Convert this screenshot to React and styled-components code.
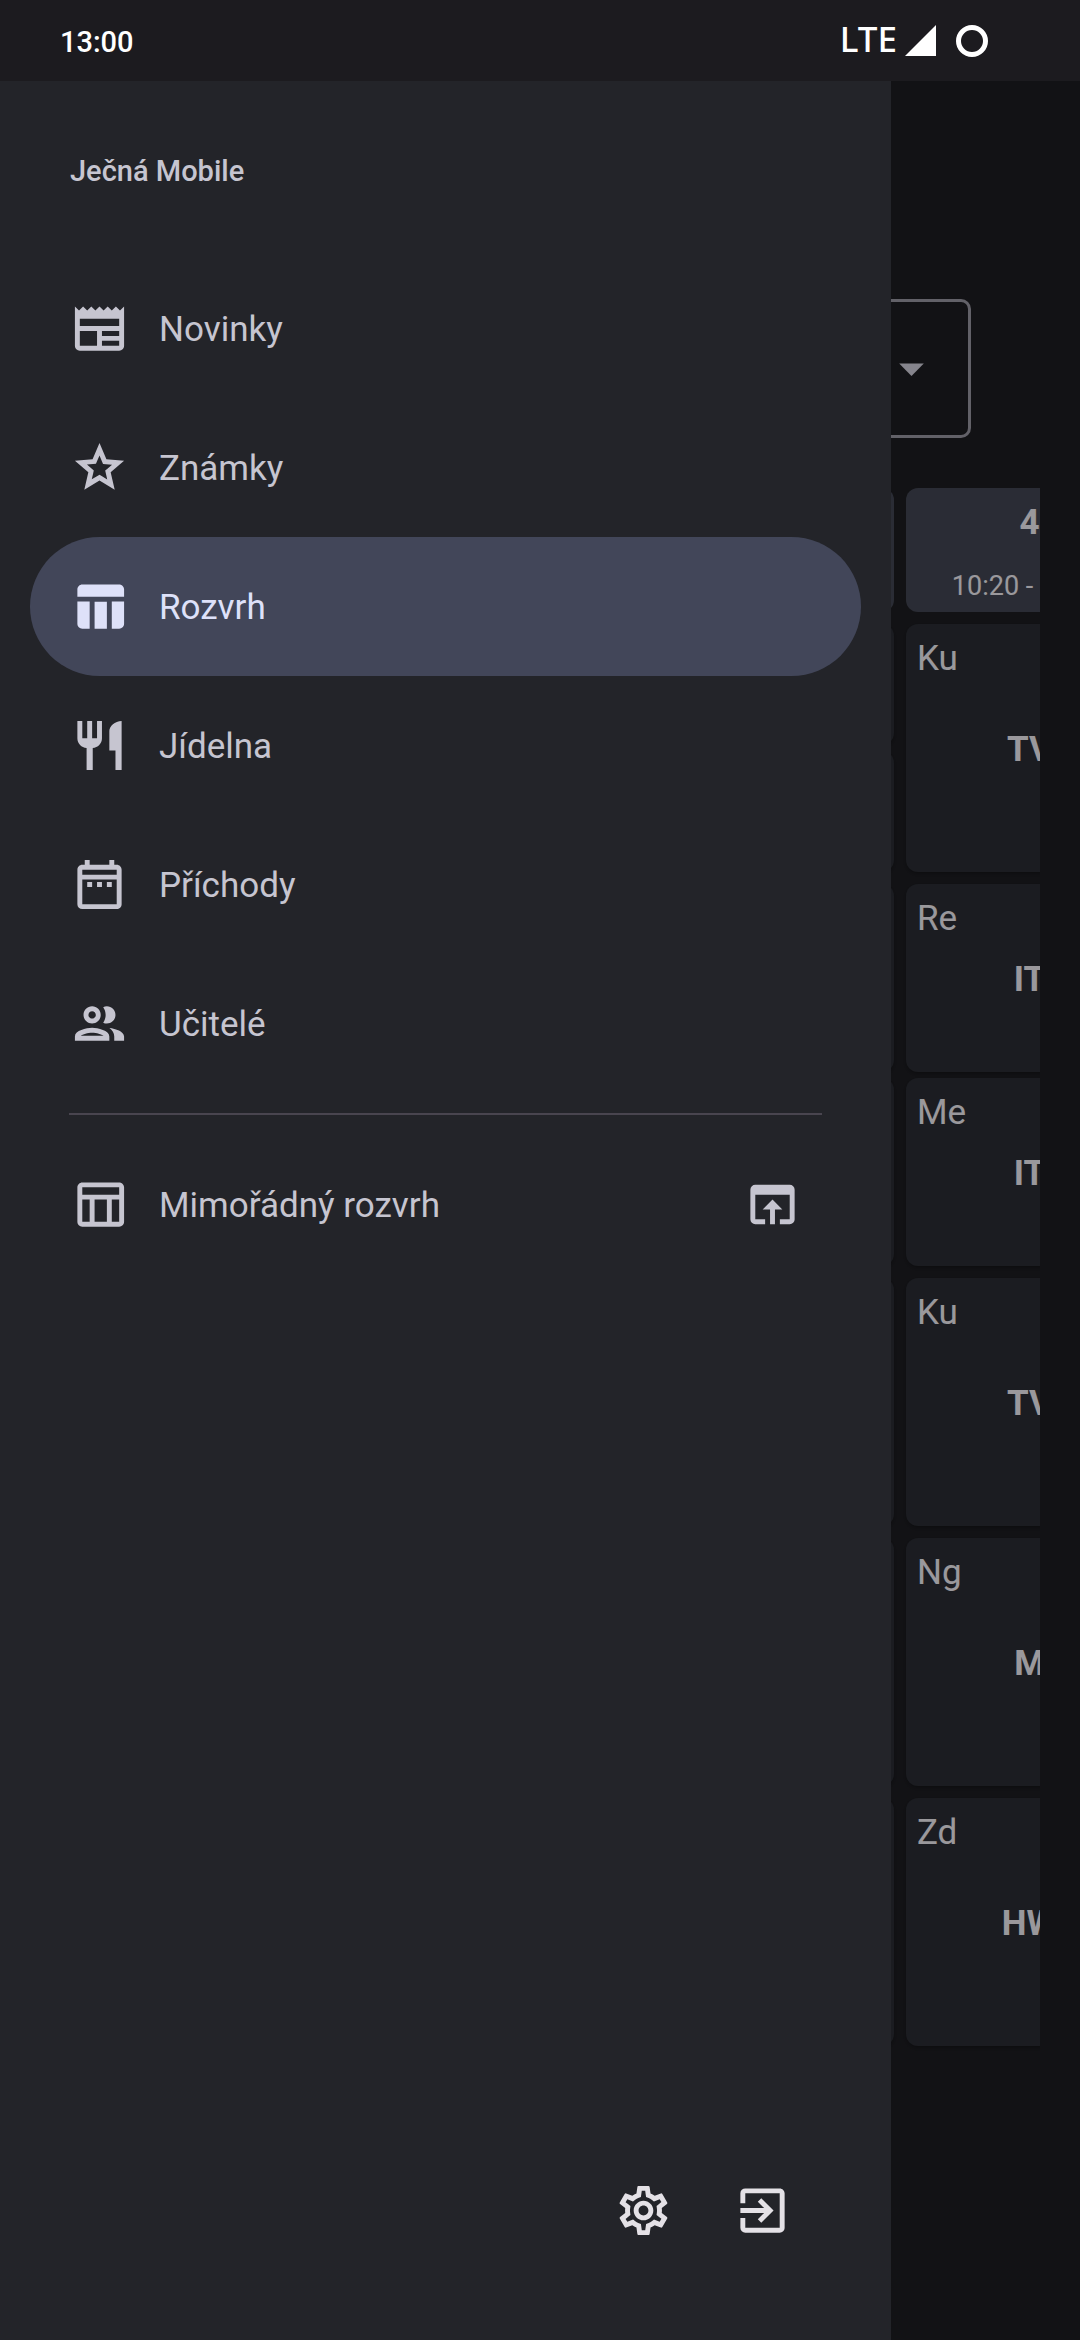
import React from 'react';
import styled, { createGlobalStyle } from 'styled-components';
import {
  MdNewspaper,
  MdOutlineGrade,
  MdTableChart,
  MdRestaurant,
  MdOutlineDateRange,
  MdOutlineGroup,
  MdOutlineTableChart,
  MdOpenInBrowser,
  MdOutlineSettings,
  MdExitToApp,
  MdArrowDropDown,
} from 'react-icons/md';

const color = {
  surface: '#1b1b1f',
  drawer: '#232429',
  selected: '#424659',
  onSelected: '#dee1f9',
  muted: '#c6c5d0',
  text: '#e4e1e6',
  divider: '#49454f',
  outline: '#918f9a',
  lesson: '#282a31',
  period: '#3f424f',
};

const GlobalStyle = createGlobalStyle`
  *, *::before, *::after { box-sizing: border-box; }
  body {
    margin: 0;
    background: ${color.surface};
    color: ${color.text};
    font-family: Roboto, "Noto Sans", sans-serif;
  }
`;

const Screen = styled.div`
  display: flex;
  flex-direction: column;
  min-height: 100vh;
`;

const StatusBar = styled.header`
  display: flex;
  align-items: center;
  justify-content: space-between;
  height: 81px;
  padding: 0 92px 0 60px;
  background: #1c1b1f;
  color: #fff;
`;

const Clock = styled.time`
  padding-top: 3px;
  font-size: 29px;
  font-weight: 500;
  line-height: 40px;
`;

const StatusIcons = styled.div`
  display: flex;
  align-items: center;
`;

const Network = styled.span`
  margin-right: 8px;
  padding-bottom: 3px;
  font-family: "Noto Sans", sans-serif;
  font-size: 35px;
  font-weight: 500;
  line-height: 40px;
`;

const Signal = styled.svg`
  width: 31px;
  height: 31px;
  margin-right: 20px;
  fill: #fff;
`;

const Ring = styled.svg`
  width: 32px;
  height: 32px;
  fill: none;
  stroke: #fff;
  stroke-width: 5;
`;

const Stage = styled.div`
  flex: 1;
  display: grid;
  grid-template: minmax(0, 1fr) / minmax(0, 1fr);

  > * {
    grid-area: 1 / 1;
  }
`;

const Page = styled.main`
  display: flex;
  flex-direction: column;
  gap: 50px;
  padding: 218px 40px 40px;
  overflow: hidden;
`;

const Scrim = styled.div`
  background: rgba(0, 0, 0, 0.32);
`;

const Filters = styled.div`
  display: flex;
  gap: 37px;
  padding: 0 69px;
`;

const SelectBox = styled.label`
  flex: 1;
  display: flex;
  align-items: center;
  height: 139px;
  padding-right: 27px;
  border: 3px solid ${color.outline};
  border-radius: 10px;
  color: ${color.muted};
  font-size: 59px;
`;

const Select = styled.select`
  flex: 1;
  min-width: 0;
  height: 100%;
  padding: 0 37px;
  appearance: none;
  border: 0;
  outline: 0;
  background: transparent;
  color: ${color.text};
  font: 400 35px/50px Roboto, sans-serif;
`;

const Timetable = styled.section`
  display: flex;
  flex-direction: column;
  gap: 12px;
  overflow: hidden;
  padding-bottom: 8px;
`;

const Day = styled.div`
  display: flex;
  gap: 12px;
`;

const DayLabel = styled.div`
  flex: none;
  width: 77px;
`;

const Period = styled.div`
  flex: none;
  display: flex;
  flex-direction: column;
  align-items: center;
  justify-content: space-between;
  width: 247px;
  height: 124px;
  padding: 10px 10px 6px;
  border-radius: 12px;
  background: ${color.period};
`;

const PeriodNumber = styled.strong`
  font-size: 35px;
  font-weight: 700;
  line-height: 50px;
`;

const PeriodTime = styled.span`
  font-size: 27px;
  line-height: 40px;
  white-space: nowrap;
`;

const Slot = styled.div`
  flex: none;
  display: flex;
  flex-direction: column;
  gap: 6px;
  width: 247px;
  min-height: 248px;
`;

const Lesson = styled.article`
  flex: 1;
  display: grid;
  grid-template: minmax(0, 1fr) / minmax(0, 1fr);
  min-height: ${(p) => (p.$tall ? 188 : 118)}px;
  padding: 10px 11px;
  border-radius: 12px;
  background: ${color.lesson};
  box-shadow: 0 2px 3px rgba(0, 0, 0, 0.2);

  > * {
    grid-area: 1 / 1;
  }
`;

const Teacher = styled.span`
  font-size: 35px;
  line-height: 50px;
`;

const Subject = styled.strong`
  place-self: center;
  padding-top: 3px;
  font-size: 35px;
  font-weight: 700;
  line-height: 50px;
`;

const Drawer = styled.aside`
  z-index: 1;
  display: flex;
  flex-direction: column;
  width: 82.5%;
  padding: 70px 30px;
  background: ${color.drawer};
  color: ${color.muted};
`;

const Title = styled.h1`
  margin: 0 0 68px;
  padding: 0 40px;
  font-size: 29px;
  font-weight: 500;
  line-height: 40px;
`;

const Nav = styled.nav`
  display: flex;
  flex-direction: column;
`;

const NavItem = styled.a`
  display: flex;
  align-items: center;
  gap: 30px;
  height: 139px;
  padding: 0 59px 0 40px;
  border-radius: 70px;
  background: ${(p) => (p.$active ? color.selected : 'transparent')};
  color: ${(p) => (p.$active ? color.onSelected : color.muted)};
  font-size: 35px;
  line-height: 50px;
  text-decoration: none;

  svg {
    flex: none;
    width: 59px;
    height: 59px;
  }
`;

const NavLabel = styled.span`
  flex: 1;
  padding-top: 3px;
`;

const Divider = styled.hr`
  width: auto;
  height: 2px;
  margin: 20px 39px;
  border: 0;
  background: ${color.divider};
`;

const Actions = styled.footer`
  display: flex;
  justify-content: flex-end;
  margin-top: auto;
  padding-right: 39px;
`;

const IconButton = styled.button`
  display: grid;
  place-items: center;
  width: 119px;
  height: 119px;
  padding: 0;
  border: 0;
  border-radius: 50%;
  background: transparent;
  color: ${color.text};
  font-size: 59px;
`;

const links = [
  { label: 'Novinky', Icon: MdNewspaper },
  { label: 'Známky', Icon: MdOutlineGrade },
  { label: 'Rozvrh', Icon: MdTableChart, active: true },
  { label: 'Jídelna', Icon: MdRestaurant },
  { label: 'Příchody', Icon: MdOutlineDateRange },
  { label: 'Učitelé', Icon: MdOutlineGroup },
];

const days = [
  [[{}], [{}], [{}, {}], [{ teacher: 'Ku', subject: 'TV' }]],
  [[{}], [{}], [{}, {}], [{ teacher: 'Re', subject: 'IT' }, { teacher: 'Me', subject: 'IT' }]],
  [[{}], [{}], [{}], [{ teacher: 'Ku', subject: 'TV' }]],
  [[{}], [{}], [{}], [{ teacher: 'Ng', subject: 'M' }]],
  [[{}], [{}], [{}], [{ teacher: 'Zd', subject: 'HW' }]],
];

const periods = [{}, {}, {}, { number: '4', time: '10:20 - 11:05' }];

function Filter({ label }) {
  return (
    <SelectBox>
      <Select aria-label={label} />
      <MdArrowDropDown />
    </SelectBox>
  );
}

function Schedule() {
  return (
    <Timetable>
      <Day>
        <DayLabel />
        {periods.map((p, i) => (
          <Period key={i}>
            {p.number && <PeriodNumber>{p.number}</PeriodNumber>}
            {p.time && <PeriodTime>{p.time}</PeriodTime>}
          </Period>
        ))}
      </Day>
      {days.map((slots, d) => (
        <Day key={d}>
          <DayLabel />
          {slots.map((lessons, s) => (
            <Slot key={s}>
              {lessons.map((l, i) => (
                <Lesson key={i} $tall={Boolean(l.teacher)}>
                  {l.teacher && <Teacher>{l.teacher}</Teacher>}
                  {l.subject && <Subject>{l.subject}</Subject>}
                </Lesson>
              ))}
            </Slot>
          ))}
        </Day>
      ))}
    </Timetable>
  );
}

export default function App() {
  return (
    <Screen>
      <GlobalStyle />
      <StatusBar>
        <Clock>13:00</Clock>
        <StatusIcons>
          <Network>LTE</Network>
          <Signal viewBox="0 0 31 31" aria-hidden="true">
            <path d="M31 0v31H0z" />
          </Signal>
          <Ring viewBox="0 0 32 32" aria-hidden="true">
            <circle cx="16" cy="16" r="13.5" />
          </Ring>
        </StatusIcons>
      </StatusBar>
      <Stage>
        <Page>
          <Filters>
            <Filter label="Školní rok" />
            <Filter label="Období" />
          </Filters>
          <Schedule />
        </Page>
        <Scrim />
        <Drawer>
          <Title>Ječná Mobile</Title>
          <Nav>
            {links.map(({ label, Icon, active }) => (
              <NavItem key={label} href="#" $active={active} aria-current={active ? 'page' : undefined}>
                <Icon />
                <NavLabel>{label}</NavLabel>
              </NavItem>
            ))}
            <Divider />
            <NavItem href="#">
              <MdOutlineTableChart />
              <NavLabel>Mimořádný rozvrh</NavLabel>
              <MdOpenInBrowser />
            </NavItem>
          </Nav>
          <Actions>
            <IconButton type="button" aria-label="Nastavení">
              <MdOutlineSettings />
            </IconButton>
            <IconButton type="button" aria-label="Odhlásit se">
              <MdExitToApp />
            </IconButton>
          </Actions>
        </Drawer>
      </Stage>
    </Screen>
  );
}
